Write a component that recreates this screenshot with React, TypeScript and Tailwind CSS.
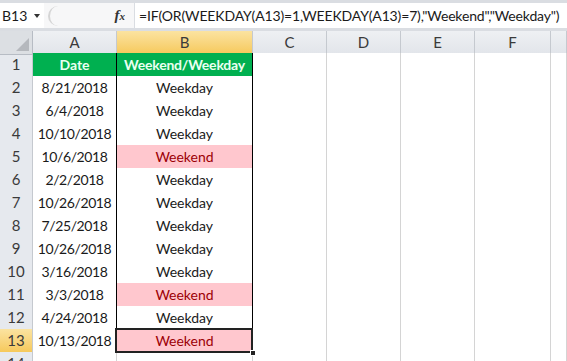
import React from "react";

type Row = { date: string; kind: "Weekday" | "Weekend" };

const rows: Row[] = [
  { date: "8/21/2018", kind: "Weekday" },
  { date: "6/4/2018", kind: "Weekday" },
  { date: "10/10/2018", kind: "Weekday" },
  { date: "10/6/2018", kind: "Weekend" },
  { date: "2/2/2018", kind: "Weekday" },
  { date: "10/26/2018", kind: "Weekday" },
  { date: "7/25/2018", kind: "Weekday" },
  { date: "10/26/2018", kind: "Weekday" },
  { date: "3/16/2018", kind: "Weekday" },
  { date: "3/3/2018", kind: "Weekend" },
  { date: "4/24/2018", kind: "Weekday" },
  { date: "10/13/2018", kind: "Weekend" },
];

const grid =
  "grid grid-cols-[33px_84px_136px_74px_74px_74px_76px_1fr]";
const blank = "border-r border-b border-[#d4d4d4] bg-white";

function RowHead({ n, active }: { n: number; active?: boolean }) {
  return (
    <div
      className={
        "flex items-center justify-center border-r border-b border-[#c5c9cf] text-[15px] text-[#3a3a3a] " +
        (active
          ? "bg-gradient-to-b from-[#fbe3a0] to-[#f6c95a]"
          : "bg-[#e6e9ee]")
      }
    >
      {n}
    </div>
  );
}

function EmptyCells() {
  return (
    <>
      <div className={blank} />
      <div className={blank} />
      <div className={blank} />
      <div className={blank} />
      <div className={blank} />
    </>
  );
}

export default function App() {
  return (
    <div className="h-[361px] w-[567px] overflow-hidden bg-white font-['Lato',sans-serif] text-[#1a1a1a]">
      {/* formula bar */}
      <div className="flex h-[31px] border-t-[3px] border-b-[3px] border-[#dadde2] bg-white">
        <div className="flex w-[44px] shrink-0 items-center pl-[2px] text-[14px]">
          B13
          <span className="ml-[7px] mt-[1px] h-0 w-0 border-x-[3px] border-t-[4px] border-x-transparent border-t-[#333]" />
        </div>
        <div className="flex w-[90px] shrink-0 items-center bg-[#f7f7f8]">
          <div className="ml-[4px] h-[20px] w-[14px] rounded-l-full border-l-2 border-[#d5d5d5]" />
          <span className="ml-auto mr-[9px] font-['Liberation_Serif',serif] text-[15px] font-bold italic text-[#333]">
            f<span className="text-[11px]">x</span>
          </span>
        </div>
        <div className="flex min-w-0 flex-1 items-center whitespace-nowrap border-l border-[#dadde2] pl-[4px] text-[14px] tracking-[-0.15px]">
          =IF(OR(WEEKDAY(A13)=1,WEEKDAY(A13)=7),"Weekend","Weekday")
        </div>
      </div>

      {/* column headers */}
      <div className={grid + " h-[22px]"}>
        <div className="relative border-r border-b border-[#b7bcc4] bg-[#dcdfe3]">
          <div className="absolute bottom-[3px] right-[3px] h-0 w-0 border-b-[13px] border-l-[13px] border-b-[#b5b8bd] border-l-transparent" />
        </div>
        {["A", "B", "C", "D", "E", "F", ""].map((c) => (
          <div
            key={c || "g"}
            className={
              "flex items-center justify-center border-r border-b border-[#c5c9cf] text-[15px] text-[#3a3a3a] " +
              (c === "B"
                ? "bg-gradient-to-b from-[#fbe3a0] to-[#f6c95a] border-b-[#e2a82c]"
                : "bg-gradient-to-b from-[#eef0f3] to-[#e2e5ea]")
            }
          >
            {c}
          </div>
        ))}
      </div>

      {/* row 1 */}
      <div className={grid + " h-[23px]"}>
        <RowHead n={1} />
        <div className="flex items-center justify-center border-r border-b border-r-black border-b-[#009a46] bg-[#00b050] text-[14px] font-bold text-[#eafff0]">
          Date
        </div>
        <div className="flex items-center justify-center border-r border-b border-black bg-[#00b050] text-[14px] font-bold tracking-[-0.2px] text-[#eafff0]">
          Weekend/Weekday
        </div>
        <EmptyCells />
      </div>

      {rows.map((r, i) => {
        const n = i + 2;
        const last = n === 13;
        const weekend = r.kind === "Weekend";
        return (
          <div key={n} className={grid + " h-[23px]"}>
            <RowHead n={n} active={last} />
            <div className="flex items-center justify-center border-r border-b border-r-black border-b-[#d4d4d4] bg-white text-[14px] tracking-[-0.4px]">
              {r.date}
            </div>
            <div
              className={
                "relative flex items-center justify-center border-r border-b border-black text-[14px] " +
                (weekend ? "bg-[#ffc7ce] text-[#9c0006]" : "bg-white")
              }
            >
              {last && (
                <>
                  <div className="absolute -left-[2px] -top-[1px] bottom-[-1px] right-[-1px] border-2 border-[#222]" />
                  <div className="absolute -bottom-[4px] -right-[4px] h-[6px] w-[6px] border border-white bg-[#222]" />
                </>
              )}
              {r.kind}
            </div>
            <EmptyCells />
          </div>
        );
      })}

      {/* row 14 partial */}
      <div className={grid + " h-[23px]"}>
        <RowHead n={14} />
        <div className={blank} />
        <div className={blank} />
        <EmptyCells />
      </div>
    </div>
  );
}
